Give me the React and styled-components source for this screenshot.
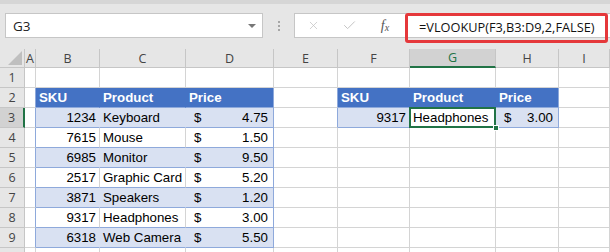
import React from 'react';
import styled, { createGlobalStyle } from 'styled-components';
import { X, Check } from 'lucide-react';

const GlobalStyle = createGlobalStyle`
  html, body {
    margin: 0;
    padding: 0;
    background: #fff;
    overflow: hidden;
  }
  body {
    font-family: "Liberation Sans", Arial, sans-serif;
  }
`;

const COLS = [25, 11, 64, 86, 88, 64, 72, 86, 63, 51];
const LETTERS = ['A', 'B', 'C', 'D', 'E', 'F', 'G', 'H', 'I'];

const GRID = '#d4d4d4';
const HEAD_LINE = '#c6c6c6';
const TABLE_LINE = '#8ea9db';
const HEAD_BLUE = '#4472c4';
const BAND = '#d9e1f2';
const GREEN = '#217346';

const products = [
  ['1234', 'Keyboard', '4.75'],
  ['7615', 'Mouse', '1.50'],
  ['6985', 'Monitor', '9.50'],
  ['2517', 'Graphic Card', '5.20'],
  ['3871', 'Speakers', '1.20'],
  ['9317', 'Headphones', '3.00'],
  ['6318', 'Web Camera', '5.50'],
];

const lookup = ['9317', 'Headphones', '3.00'];

const Toolbar = styled.div`
  position: relative;
  height: 49px;
  box-sizing: border-box;
  background: #e6e6e6;
  border-top: 4px solid #d6d6d6;
  display: flex;
  align-items: flex-start;
  padding-top: 9px;
`;

const NameBox = styled.div`
  margin-left: 5px;
  width: 258px;
  height: 25px;
  box-sizing: border-box;
  background: #fff;
  border: 1px solid ${HEAD_LINE};
  display: flex;
  align-items: center;
  padding: 0 6px 0 7px;
  font: 13.5px "Open Sans", sans-serif;
  color: #222;
`;

const DropArrow = styled.span`
  margin-left: auto;
  width: 0;
  height: 0;
  border-left: 4px solid transparent;
  border-right: 4px solid transparent;
  border-top: 4px solid #777;
`;

const Dots = styled.div`
  width: 31px;
  height: 25px;
  display: flex;
  flex-direction: column;
  align-items: center;
  justify-content: center;
  gap: 2px;

  span {
    width: 2px;
    height: 2px;
    background: #a6a6a6;
  }
`;

const FormulaBox = styled.div`
  flex: 1;
  height: 25px;
  box-sizing: border-box;
  background: #fff;
  border: 1px solid ${HEAD_LINE};
  border-right: none;
  display: flex;
  align-items: flex-start;
`;

const IconSlot = styled.div`
  width: 36px;
  height: 23px;
  flex: none;
  display: flex;
  align-items: center;
  justify-content: center;
  color: #c4c4c4;
`;

const Fx = styled.i`
  font: italic 14px "Liberation Serif", serif;
  color: #555;

  sub {
    font-size: 10px;
    vertical-align: -1px;
  }
`;

const FormulaText = styled.div`
  margin: 5px 0 0 16px;
  font: 12.75px/16px "Open Sans", sans-serif;
  color: #111;
  white-space: nowrap;
`;

const Callout = styled.div`
  position: absolute;
  left: 405px;
  top: 9px;
  width: 203px;
  height: 30px;
  box-sizing: border-box;
  border: 3px solid #e5383b;
  border-radius: 3px;
`;

const Sheet = styled.div`
  display: grid;
  grid-template-columns: ${COLS.map((c) => c + 'px').join(' ')};
  grid-template-rows: 19px;
  grid-auto-rows: 20px;
`;

const Corner = styled.div`
  box-sizing: border-box;
  background: #e6e6e6;
  border-right: 1px solid ${HEAD_LINE};
  border-bottom: 1px solid ${HEAD_LINE};
  display: flex;
  align-items: flex-end;
  justify-content: flex-end;
  padding: 0 2px 2px 0;
`;

const ColHead = styled.div`
  box-sizing: border-box;
  background: ${(p) => (p.$active ? '#d2d2d2' : '#e6e6e6')};
  color: ${(p) => (p.$active ? GREEN : '#444')};
  border-right: 1px solid ${HEAD_LINE};
  border-bottom: ${(p) => (p.$active ? `2px solid ${GREEN}` : `1px solid ${HEAD_LINE}`)};
  display: flex;
  align-items: center;
  justify-content: center;
  font: 12.5px "Open Sans", sans-serif;
`;

const RowHead = styled.div`
  box-sizing: border-box;
  background: ${(p) => (p.$active ? '#d2d2d2' : '#e6e6e6')};
  color: #444;
  border-right: ${(p) => (p.$active ? `2px solid ${GREEN}` : `1px solid ${HEAD_LINE}`)};
  border-bottom: 1px solid ${HEAD_LINE};
  display: flex;
  align-items: center;
  justify-content: center;
  font: 12.5px "Open Sans", sans-serif;
`;

const Cell = styled.div`
  position: relative;
  box-sizing: border-box;
  background: ${(p) => p.$fill};
  border-right: 1px solid ${(p) => p.$rc};
  border-bottom: 1px solid ${(p) => p.$bc};
  display: flex;
  align-items: flex-end;
  justify-content: ${(p) =>
    p.$align === 'right' ? 'flex-end' : p.$align === 'split' ? 'space-between' : 'flex-start'};
  padding: ${(p) => (p.$align === 'split' ? '0 5px 1px 8px' : '0 3px 1px 3px')};
  font-size: 13.3px;
  line-height: 16px;
  font-weight: ${(p) => (p.$bold ? 700 : 400)};
  color: ${(p) => (p.$bold ? '#fff' : '#000')};
  white-space: nowrap;
`;

const Selection = styled.div`
  position: absolute;
  top: -1px;
  left: -1px;
  right: -1px;
  bottom: -1px;
  border: 2px solid ${GREEN};
  z-index: 2;
  pointer-events: none;
`;

const FillHandle = styled.div`
  position: absolute;
  right: -4px;
  bottom: -4px;
  width: 6px;
  height: 6px;
  box-sizing: border-box;
  background: ${GREEN};
  border: 1px solid #fff;
  z-index: 3;
`;

function SelectAll() {
  return (
    <svg width="14" height="14" viewBox="0 0 14 14">
      <polygon points="14,0 14,14 0,14" fill="#bfbfbf" />
    </svg>
  );
}

function tableFor(r, L) {
  if (r >= 2 && r <= 9 && ['B', 'C', 'D'].includes(L)) {
    return { idx: ['B', 'C', 'D'].indexOf(L), last: L === 'D', data: r === 2 ? null : products[r - 3] };
  }
  if (r >= 2 && r <= 3 && ['F', 'G', 'H'].includes(L)) {
    return { idx: ['F', 'G', 'H'].indexOf(L), last: L === 'H', data: r === 2 ? null : lookup };
  }
  return null;
}

const HEADERS = ['SKU', 'Product', 'Price'];

function SheetCell({ r, L }) {
  const t = tableFor(r, L);
  const edge = (L === 'A' && r >= 2 && r <= 9) || (L === 'E' && r >= 2 && r <= 3);

  if (!t) {
    return <Cell $fill="#fff" $rc={edge ? TABLE_LINE : GRID} $bc={GRID} />;
  }

  const header = r === 2;
  const banded = !header && r % 2 === 1;
  const active = r === 3 && L === 'G';
  const fill = header ? HEAD_BLUE : active ? '#fff' : banded ? BAND : '#fff';
  const rc = t.last ? TABLE_LINE : header ? HEAD_BLUE : banded ? BAND : GRID;

  if (header) {
    return (
      <Cell $fill={fill} $rc={rc} $bc={TABLE_LINE} $bold>
        {HEADERS[t.idx]}
      </Cell>
    );
  }

  const value = t.data[t.idx];
  return (
    <Cell
      $fill={fill}
      $rc={rc}
      $bc={TABLE_LINE}
      $align={t.idx === 0 ? 'right' : t.idx === 2 ? 'split' : 'left'}
    >
      {t.idx === 2 ? (
        <>
          <span>$</span>
          <span>{value}</span>
        </>
      ) : (
        value
      )}
      {active && (
        <>
          <Selection />
          <FillHandle />
        </>
      )}
    </Cell>
  );
}

export default function App() {
  // row 10 only peeks in at the bottom edge, its number is not visible
  const rows = [1, 2, 3, 4, 5, 6, 7, 8, 9, 10];
  return (
    <>
      <GlobalStyle />
      <Toolbar>
        <NameBox>
          G3
          <DropArrow />
        </NameBox>
        <Dots>
          <span />
          <span />
          <span />
        </Dots>
        <FormulaBox>
          <IconSlot>
            <X size={13} strokeWidth={1.4} />
          </IconSlot>
          <IconSlot>
            <Check size={15} strokeWidth={1.6} />
          </IconSlot>
          <IconSlot>
            <Fx>
              f<sub>x</sub>
            </Fx>
          </IconSlot>
          <FormulaText>=VLOOKUP(F3,B3:D9,2,FALSE)</FormulaText>
        </FormulaBox>
        <Callout />
      </Toolbar>
      <Sheet>
        <Corner>
          <SelectAll />
        </Corner>
        {LETTERS.map((L) => (
          <ColHead key={L} $active={L === 'G'}>
            {L}
          </ColHead>
        ))}
        {rows.map((r) => (
          <React.Fragment key={r}>
            <RowHead $active={r === 3}>{r < 10 ? r : ''}</RowHead>
            {LETTERS.map((L) => (
              <SheetCell key={L} r={r} L={L} />
            ))}
          </React.Fragment>
        ))}
      </Sheet>
    </>
  );
}
